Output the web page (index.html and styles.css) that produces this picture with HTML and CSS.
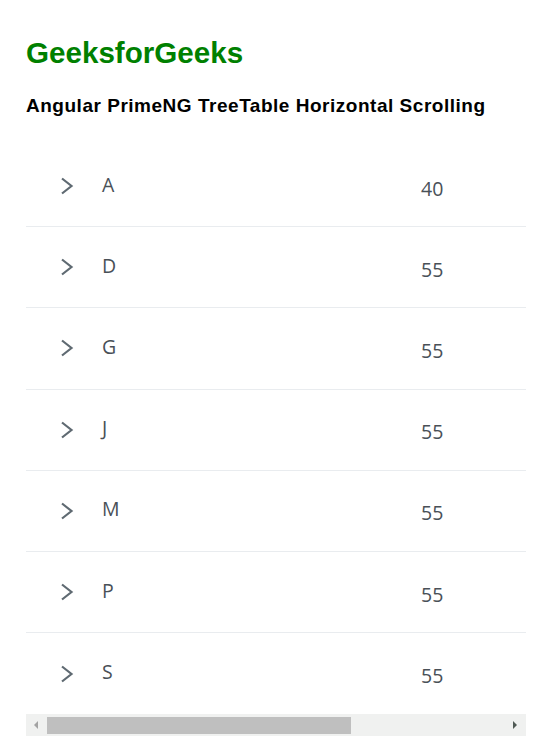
FILE: index.html
```html
<!DOCTYPE html>
<html lang="en">
<head>
<meta charset="utf-8">
<title>Angular PrimeNG TreeTable Horizontal Scrolling</title>
<link rel="stylesheet" href="styles.css">
</head>
<body>
<h1 class="brand">GeeksforGeeks</h1>
<h3 class="subtitle">Angular PrimeNG TreeTable Horizontal Scrolling</h3>
<div class="tt-wrapper">
  <div class="tt-viewport">
    <div class="tt-table">
      <div class="tt-row">
        <div class="tt-cell tt-name"><button class="tt-toggler" aria-label="expand"><svg width="14" height="18" viewBox="0 0 14 18"><polyline points="2,1.5 11.5,9 2,16.5" fill="none" stroke="#5f6a72" stroke-width="2.2"/></svg></button><span>A</span></div>
        <div class="tt-cell tt-value">40</div>
      </div>
      <div class="tt-row">
        <div class="tt-cell tt-name"><button class="tt-toggler" aria-label="expand"><svg width="14" height="18" viewBox="0 0 14 18"><polyline points="2,1.5 11.5,9 2,16.5" fill="none" stroke="#5f6a72" stroke-width="2.2"/></svg></button><span>D</span></div>
        <div class="tt-cell tt-value">55</div>
      </div>
      <div class="tt-row">
        <div class="tt-cell tt-name"><button class="tt-toggler" aria-label="expand"><svg width="14" height="18" viewBox="0 0 14 18"><polyline points="2,1.5 11.5,9 2,16.5" fill="none" stroke="#5f6a72" stroke-width="2.2"/></svg></button><span>G</span></div>
        <div class="tt-cell tt-value">55</div>
      </div>
      <div class="tt-row">
        <div class="tt-cell tt-name"><button class="tt-toggler" aria-label="expand"><svg width="14" height="18" viewBox="0 0 14 18"><polyline points="2,1.5 11.5,9 2,16.5" fill="none" stroke="#5f6a72" stroke-width="2.2"/></svg></button><span>J</span></div>
        <div class="tt-cell tt-value">55</div>
      </div>
      <div class="tt-row">
        <div class="tt-cell tt-name"><button class="tt-toggler" aria-label="expand"><svg width="14" height="18" viewBox="0 0 14 18"><polyline points="2,1.5 11.5,9 2,16.5" fill="none" stroke="#5f6a72" stroke-width="2.2"/></svg></button><span>M</span></div>
        <div class="tt-cell tt-value">55</div>
      </div>
      <div class="tt-row">
        <div class="tt-cell tt-name"><button class="tt-toggler" aria-label="expand"><svg width="14" height="18" viewBox="0 0 14 18"><polyline points="2,1.5 11.5,9 2,16.5" fill="none" stroke="#5f6a72" stroke-width="2.2"/></svg></button><span>P</span></div>
        <div class="tt-cell tt-value">55</div>
      </div>
      <div class="tt-row">
        <div class="tt-cell tt-name"><button class="tt-toggler" aria-label="expand"><svg width="14" height="18" viewBox="0 0 14 18"><polyline points="2,1.5 11.5,9 2,16.5" fill="none" stroke="#5f6a72" stroke-width="2.2"/></svg></button><span>S</span></div>
        <div class="tt-cell tt-value">55</div>
      </div>
    </div>
  </div>
  <div class="tt-scrollbar">
    <div class="sb-button"><svg width="20" height="22" viewBox="0 0 20 22"><polygon points="12,7 12,15 8,11" fill="#a3a3a3"/></svg></div>
    <div class="sb-track"><div class="sb-thumb"></div></div>
    <div class="sb-button"><svg width="20" height="22" viewBox="0 0 20 22"><polygon points="7,7 7,15 11,11" fill="#505a55"/></svg></div>
  </div>
</div>
</body>
</html>
```
FILE: styles.css
```css
html, body {
  margin: 0;
  padding: 0;
  background: #ffffff;
  overflow: hidden;
}
body {
  padding: 36px 0 0 26px;
  font-family: "Liberation Sans", Arial, sans-serif;
}
.brand {
  margin: 0;
  font-size: 29.6px;
  line-height: 34px;
  font-weight: bold;
  color: #008000;
}
.subtitle {
  margin: 26px 0 0 0;
  font-size: 19px;
  letter-spacing: 0.52px;
  line-height: 20px;
  font-weight: bold;
  color: #000000;
}
.tt-wrapper {
  margin-top: 30px;
  width: 500px;
}
.tt-viewport {
  width: 500px;
  overflow: hidden;
}
.tt-table {
  width: 767px;
  font-family: "Open Sans", "Noto Sans", sans-serif;
  font-size: 19.5px;
  color: #495057;
}
.tt-row {
  display: grid;
  grid-template-columns: 379px 388px;
  align-items: center;
  height: 81.2px;
  box-sizing: border-box;
  border-bottom: 1px solid #e9ecef;
}
.tt-row:last-child {
  border-bottom: none;
}
.tt-cell {
  box-sizing: border-box;
}
.tt-name {
  display: flex;
  align-items: center;
  padding-left: 34px;
}
.tt-name span {
  padding-bottom: 4px;
  margin-left: 28px;
}
.tt-toggler {
  display: flex;
  align-items: center;
  justify-content: center;
  width: 14px;
  height: 18px;
  padding: 0;
  margin: 0;
  border: none;
  background: transparent;
}
.tt-value {
  padding-left: 16px;
  padding-top: 4px;
}
.tt-scrollbar {
  display: flex;
  height: 22px;
  background: #f0f1f0;
}
.sb-button {
  width: 20px;
  height: 22px;
  flex: none;
}
.sb-button svg {
  display: block;
}
.sb-track {
  flex: 1;
  padding: 3px 0 2px 1px;
  box-sizing: border-box;
}
.sb-thumb {
  width: 304px;
  height: 100%;
  background: #bfbfbf;
}
```
